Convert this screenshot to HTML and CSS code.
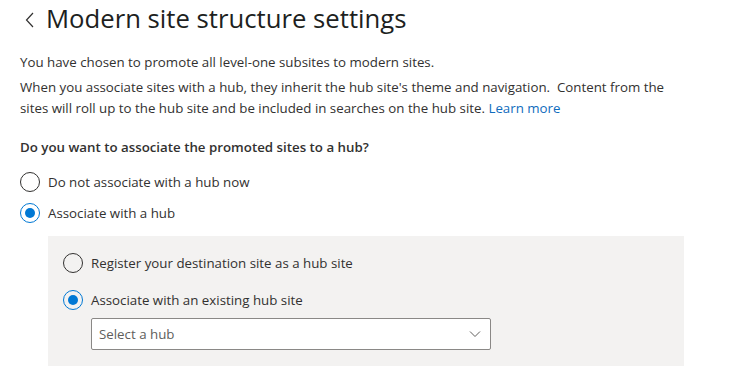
FILE: index.html
```html
<!DOCTYPE html>
<html lang="en">
<head>
<meta charset="utf-8">
<title>Modern site structure settings</title>
<link rel="stylesheet" href="styles.css">
</head>
<body>
<div class="page">
  <header class="header">
    <svg class="back" width="10" height="16" viewBox="0 0 10 16"><path d="M8 1 L1.5 8 L8 15" fill="none" stroke="#323130" stroke-width="1.2"/></svg>
    <h1 class="title">Modern site structure settings</h1>
  </header>
  <p class="text first">You have chosen to promote all level-one subsites to modern sites.</p>
  <p class="text"><span>When you associate sites with a hub, they inherit the hub site's theme and navigation.&nbsp; Content from the</span><br><span>sites will roll up to the hub site and be included in searches on the hub site.</span> <a class="link" href="#">Learn more</a></p>
  <div class="question">Do you want to associate the promoted sites to a hub?</div>
  <div class="options">
    <label class="option"><span class="radio"></span><span>Do not associate with a hub now</span></label>
    <label class="option"><span class="radio checked"></span><span>Associate with a hub</span></label>
  </div>
  <div class="panel">
    <label class="option"><span class="radio"></span><span>Register your destination site as a hub site</span></label>
    <label class="option"><span class="radio checked"></span><span>Associate with an existing hub site</span></label>
    <div class="select">
      <span class="placeholder">Select a hub</span>
      <svg width="12" height="8" viewBox="0 0 12 8"><path d="M1 1.5 L6 6.5 L11 1.5" fill="none" stroke="#605e5c" stroke-width="1"/></svg>
    </div>
  </div>
</div>
</body>
</html>
```
FILE: styles.css
```css
* { box-sizing: border-box; }
html, body { margin: 0; padding: 0; background: #fff; }
body {
  font-family: "Open Sans", "Noto Sans", sans-serif;
  color: #323130;
  font-size: 13.3px;
}
.page { padding: 0 0 0 20px; width: 700px; }
.header { display: flex; align-items: center; gap: 11px; height: 38px; padding-left: 5px; }
.back { display: block; margin-top: 2px; }
.title { margin: 0; font-weight: 400; font-size: 25.7px; line-height: 38px; color: #201f1e; }
.text { margin: 0; line-height: 21px; width: 680px; }
.text.first { margin-top: 14px; margin-bottom: 4px; }
.link { color: #0f6cbd; text-decoration: none; }
.question { font-weight: 600; margin-top: 18px; line-height: 20px; }
.options { display: flex; flex-direction: column; gap: 11px; margin-top: 15px; }
.option { display: flex; align-items: center; gap: 8px; line-height: 20px; }
.radio { width: 20px; height: 20px; border-radius: 50%; border: 1px solid #323130; flex: none; position: relative; }
.radio.checked { border-color: #0078d4; }
.radio.checked::after { content: ""; position: absolute; left: 4px; top: 4px; width: 10px; height: 10px; border-radius: 50%; background: #0078d4; }
.panel { margin: 13px 0 0 28px; width: 636px; background: #f3f2f1; padding: 17px 0 16px 15px; display: flex; flex-direction: column; }
.panel .option + .option { margin-top: 17px; }
.select { margin: 8px 0 0 28px; width: 400px; height: 32px; background: #fff; border: 1px solid #8a8886; border-radius: 2px; display: flex; align-items: center; justify-content: space-between; padding: 0 9px 0 7px; }
.placeholder { color: #605e5c; }
```
